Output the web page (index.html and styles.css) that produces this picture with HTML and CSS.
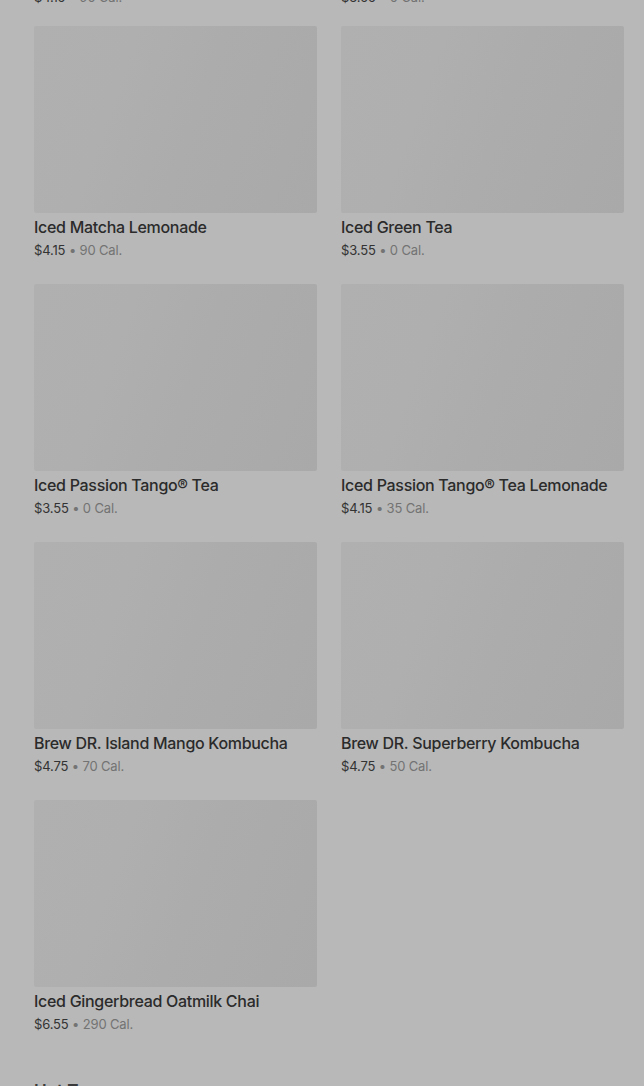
FILE: index.html
```html
<!DOCTYPE html>
<html lang="en">
<head>
<meta charset="utf-8">
<title>Iced Teas</title>
<link rel="stylesheet" href="styles.css">
</head>
<body>
<main class="menu">
  <div class="tail-row">
    <p class="price">$4.15 <span class="cal">• 90 Cal.</span></p>
    <p class="price">$3.55 <span class="cal">• 0 Cal.</span></p>
  </div>
  <section class="grid">
    <article class="card">
      <div class="thumb"></div>
      <h3 class="name">Iced Matcha Lemonade</h3>
      <p class="price">$4.15 <span class="cal">• 90 Cal.</span></p>
    </article>
    <article class="card">
      <div class="thumb"></div>
      <h3 class="name">Iced Green Tea</h3>
      <p class="price">$3.55 <span class="cal">• 0 Cal.</span></p>
    </article>
    <article class="card">
      <div class="thumb"></div>
      <h3 class="name">Iced Passion Tango® Tea</h3>
      <p class="price">$3.55 <span class="cal">• 0 Cal.</span></p>
    </article>
    <article class="card">
      <div class="thumb"></div>
      <h3 class="name">Iced Passion Tango® Tea Lemonade</h3>
      <p class="price">$4.15 <span class="cal">• 35 Cal.</span></p>
    </article>
    <article class="card">
      <div class="thumb"></div>
      <h3 class="name">Brew DR. Island Mango Kombucha</h3>
      <p class="price">$4.75 <span class="cal">• 70 Cal.</span></p>
    </article>
    <article class="card">
      <div class="thumb"></div>
      <h3 class="name">Brew DR. Superberry Kombucha</h3>
      <p class="price">$4.75 <span class="cal">• 50 Cal.</span></p>
    </article>
    <article class="card">
      <div class="thumb"></div>
      <h3 class="name">Iced Gingerbread Oatmilk Chai</h3>
      <p class="price">$6.55 <span class="cal">• 290 Cal.</span></p>
    </article>
  </section>
  <h2 class="section-title">Hot Teas</h2>
</main>
</body>
</html>
```
FILE: styles.css
```css
html, body {
  margin: 0;
  padding: 0;
  background: #b8b8b8;
  font-family: Inter, "Noto Sans", sans-serif;
  overflow: hidden;
}

.menu {
  padding: 0 20px 0 34px;
}

.tail-row {
  display: grid;
  grid-template-columns: 283px 283px;
  column-gap: 24px;
  margin-top: -12px;
}

.grid {
  display: grid;
  grid-template-columns: 283px 283px;
  column-gap: 24px;
  row-gap: 25px;
  margin-top: 20px;
}

.card {
  display: flex;
  flex-direction: column;
}

.thumb {
  height: 187px;
  border-radius: 2px;
  background: linear-gradient(110deg, #b0b0b0 0%, #afafaf 30%, #acacac 55%, #a9a9a9 100%);
}

.name {
  margin: 4px 0 4px;
  font-size: 16px;
  line-height: 20px;
  font-weight: 500;
  color: #2b2b2b;
  letter-spacing: -0.3px;
}

.price {
  margin: 0;
  font-size: 13px;
  line-height: 18px;
  color: #333333;
  white-space: nowrap;
  letter-spacing: -0.15px;
}

.cal {
  color: #737373;
}

.section-title {
  margin: 46px 0 0;
  font-size: 17px;
  line-height: 24px;
  font-weight: 600;
  color: #3a3a3a;
}
```
